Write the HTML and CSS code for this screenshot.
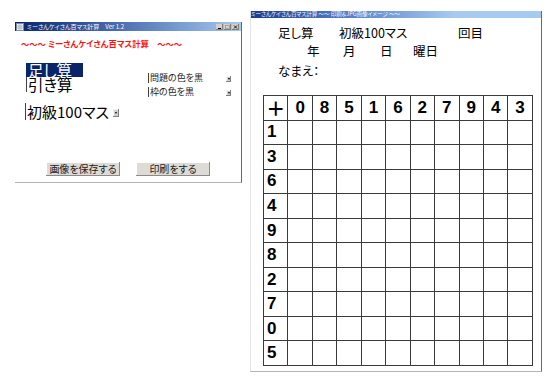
FILE: index.html
```html
<!DOCTYPE html>
<html lang="ja">
<head>
<meta charset="utf-8">
<link rel="stylesheet" href="styles.css">
</head>
<body>
<div class="win win1">
  <div class="titlebar tb1">
    <svg class="ticon" width="8" height="8" viewBox="0 0 8 8"><rect x="0.5" y="0.5" width="7" height="7" fill="#fff" stroke="#7a8aa8"/><path d="M1 3h6M1 5h6M3 1v6M5 1v6" stroke="#9aa6bd" stroke-width="0.8"/></svg>
    <span class="ttext">ミーさんケイさん百マス計算　Ver 1.2</span>
    <span class="tbtns">
      <span class="tbtn"><svg width="7" height="6" viewBox="0 0 7 6"><path d="M2 4.5h3" stroke="#000" stroke-width="1"/></svg></span>
      <span class="tbtn"><svg width="7" height="6" viewBox="0 0 7 6"><rect x="1.5" y="1.5" width="4" height="3" fill="none" stroke="#9a9a9a" stroke-width="0.8"/></svg></span>
      <span class="tbtn"><svg width="7" height="6" viewBox="0 0 7 6"><path d="M2 1.5l3 3M5 1.5l-3 3" stroke="#000" stroke-width="0.9"/></svg></span>
    </span>
  </div>
  <div class="body1">
    <div class="banner">～～～ ミーさんケイさん百マス計算　～～～</div>
    <div class="controls">
      <div class="leftcol">
        <div class="listbox">
          <div class="opt sel">足し算</div>
          <div class="opt">引き算</div>
        </div>
        <div class="combo big">初級100マス<span class="arrow"></span></div>
      </div>
      <div class="rightcol">
        <div class="combo small">問題の色を黒<span class="arrow"></span></div>
        <div class="combo small">枠の色を黒<span class="arrow"></span></div>
      </div>
    </div>
    <div class="buttons">
      <span class="btn">画像を保存する</span>
      <span class="btn">印刷をする</span>
    </div>
  </div>
</div>

<div class="win win2">
  <div class="titlebar tb2">
    <span class="ttext2">ミーさんケイさん百マス計算 ～～ 印刷＆JPG画像イメージ ～～</span>
  </div>
  <div class="line l1"><span class="w61">足し算</span><span class="w119">初級100マス</span><span>回目</span></div>
  <div class="line l2"><span class="w36">年</span><span class="w37">月</span><span class="w33">日</span><span>曜日</span></div>
  <div class="line l3">なまえ：</div>
  <div class="grid">
    <div class="c hd plus">＋</div><div class="c hd">0</div><div class="c hd">8</div><div class="c hd">5</div><div class="c hd">1</div><div class="c hd">6</div><div class="c hd">2</div><div class="c hd">7</div><div class="c hd">9</div><div class="c hd">4</div><div class="c hd">3</div>
    <div class="c rl">1</div><div class="c"></div><div class="c"></div><div class="c"></div><div class="c"></div><div class="c"></div><div class="c"></div><div class="c"></div><div class="c"></div><div class="c"></div><div class="c"></div>
    <div class="c rl">3</div><div class="c"></div><div class="c"></div><div class="c"></div><div class="c"></div><div class="c"></div><div class="c"></div><div class="c"></div><div class="c"></div><div class="c"></div><div class="c"></div>
    <div class="c rl">6</div><div class="c"></div><div class="c"></div><div class="c"></div><div class="c"></div><div class="c"></div><div class="c"></div><div class="c"></div><div class="c"></div><div class="c"></div><div class="c"></div>
    <div class="c rl">4</div><div class="c"></div><div class="c"></div><div class="c"></div><div class="c"></div><div class="c"></div><div class="c"></div><div class="c"></div><div class="c"></div><div class="c"></div><div class="c"></div>
    <div class="c rl">9</div><div class="c"></div><div class="c"></div><div class="c"></div><div class="c"></div><div class="c"></div><div class="c"></div><div class="c"></div><div class="c"></div><div class="c"></div><div class="c"></div>
    <div class="c rl">8</div><div class="c"></div><div class="c"></div><div class="c"></div><div class="c"></div><div class="c"></div><div class="c"></div><div class="c"></div><div class="c"></div><div class="c"></div><div class="c"></div>
    <div class="c rl">2</div><div class="c"></div><div class="c"></div><div class="c"></div><div class="c"></div><div class="c"></div><div class="c"></div><div class="c"></div><div class="c"></div><div class="c"></div><div class="c"></div>
    <div class="c rl">7</div><div class="c"></div><div class="c"></div><div class="c"></div><div class="c"></div><div class="c"></div><div class="c"></div><div class="c"></div><div class="c"></div><div class="c"></div><div class="c"></div>
    <div class="c rl">0</div><div class="c"></div><div class="c"></div><div class="c"></div><div class="c"></div><div class="c"></div><div class="c"></div><div class="c"></div><div class="c"></div><div class="c"></div><div class="c"></div>
    <div class="c rl">5</div><div class="c"></div><div class="c"></div><div class="c"></div><div class="c"></div><div class="c"></div><div class="c"></div><div class="c"></div><div class="c"></div><div class="c"></div><div class="c"></div>
  </div>
</div>
</body>
</html>
```
FILE: styles.css
```css
html, body {
  margin: 0;
  padding: 0;
}
body {
  width: 552px;
  height: 388px;
  background: #fff;
  position: relative;
  overflow: hidden;
  font-family: "Noto Sans CJK JP", "Noto Sans", sans-serif;
  font-feature-settings: "palt";
  color: #000;
}
.win {
  position: absolute;
  background: #fff;
  box-sizing: border-box;
}
.win1 {
  left: 15px;
  top: 22px;
  width: 227px;
  height: 161px;
  border-right: 1px solid #6a6a6a;
  border-bottom: 1px solid #b4b4b4;
}
.win2 {
  left: 250px;
  top: 11px;
  width: 292px;
  height: 361px;
  border-left: 1px solid #e4e4e4;
  border-right: 1px solid #6a6a6a;
  border-bottom: 1px solid #b4b4b4;
}
.titlebar {
  display: flex;
  align-items: center;
  color: #fff;
  white-space: nowrap;
  overflow: hidden;
}
.tb1 {
  height: 9px;
  background: linear-gradient(to right, #0a246a 0%, #4a6cb0 45%, #a6caf0 100%);
  padding-left: 1px;
}
.ticon {
  display: block;
  flex: none;
}
.ttext {
  font-size: 6px;
  line-height: 9px;
  margin-left: 3px;
}
.tbtns {
  margin-left: auto;
  margin-right: 2px;
  display: flex;
  gap: 1px;
}
.tbtn {
  width: 7px;
  height: 6px;
  background: #d4d0c8;
  box-shadow: inset -1px -1px 0 #808080;
  display: block;
}
.tbtn svg {
  display: block;
}
.tb2 {
  height: 7px;
  background: linear-gradient(to right, #1a3a8c 0%, #5a82c8 35%, #a6caf0 70%, #a6caf0 100%);
}
.ttext2 {
  font-size: 5.5px;
  line-height: 7px;
  margin-left: 0;
}
.body1 {
  padding: 7px 0 0 6px;
}
.banner {
  color: #ff1010;
  font-size: 8.3px;
  line-height: 10px;
  font-weight: 700;
  white-space: nowrap;
}
.controls {
  display: flex;
  margin-top: 15px;
  padding-left: 4px;
}
.leftcol {
  width: 123px;
  flex: none;
}
.listbox {
  margin-left: 1px;
  width: 57px;
  border-left: 1px solid #404040;
  box-sizing: border-box;
}
.opt {
  font-size: 15.5px;
  line-height: 14px;
  height: 14px;
  padding-left: 1px;
  white-space: nowrap;
}
.opt + .opt {
  height: 15px;
  line-height: 15px;
}
.sel {
  background: #0a246a;
  color: #fff;
  margin-left: -1px;
  padding-left: 2px;
}
.combo {
  position: relative;
  box-sizing: border-box;
  border-left: 1px solid #404040;
  white-space: nowrap;
}
.combo .arrow {
  position: absolute;
  background: #d4d0c8;
  box-shadow: inset -1px -1px 0 #808080, inset 1px 1px 0 #f4f4f4;
}
.combo .arrow::after {
  content: "";
  position: absolute;
  left: 50%;
  top: 50%;
  border-left: 1.5px solid transparent;
  border-right: 1.5px solid transparent;
  border-top: 2px solid #000;
  transform: translate(-50%, -50%);
}
.big {
  margin-top: 11px;
  width: 94px;
  height: 17px;
  font-size: 15px;
  line-height: 17px;
  padding-left: 1px;
}
.big .arrow {
  right: 0;
  top: 6px;
  width: 6px;
  height: 8px;
}
.rightcol {
  margin-top: 10px;
  display: flex;
  flex-direction: column;
  gap: 4px;
}
.small {
  width: 84px;
  height: 10px;
  font-size: 9px;
  line-height: 10px;
  padding-left: 1px;
  color: #222;
}
.small .arrow {
  right: 1px;
  top: 3px;
  width: 5px;
  height: 6px;
}
.buttons {
  display: flex;
  gap: 16px;
  margin-top: 42px;
  margin-left: 25px;
}
.btn {
  width: 74px;
  height: 14px;
  box-sizing: border-box;
  background: #dedbd6;
  box-shadow: inset -1px -1px 0 #8a8a8a, inset 1px 1px 0 #fff;
  font-size: 10px;
  line-height: 14px;
  text-align: center;
  color: #222;
  white-space: nowrap;
}
.line {
  font-size: 12.5px;
  height: 16px;
  line-height: 16px;
  white-space: nowrap;
  display: flex;
}
.line span {
  display: block;
  flex: none;
}
.l1 {
  margin-top: 7px;
  padding-left: 27px;
}
.l2 {
  margin-top: 2px;
  padding-left: 56px;
}
.l3 {
  margin-top: 4px;
  padding-left: 27px;
}
.w61 { width: 61px; }
.w119 { width: 119px; }
.w36 { width: 36px; }
.w37 { width: 37px; }
.w33 { width: 33px; }
.grid {
  margin-top: 16px;
  margin-left: 12px;
  display: grid;
  grid-template-columns: repeat(11, 24.45px);
  grid-auto-rows: 24.55px;
  width: 270px;
  box-sizing: border-box;
  border-top: 1px solid #3a3a3a;
  border-left: 1px solid #3a3a3a;
}
.c {
  border-right: 1px solid #3a3a3a;
  border-bottom: 1px solid #3a3a3a;
  box-sizing: border-box;
  font-family: "Liberation Sans", Arial, sans-serif;
  font-weight: 700;
  font-size: 17px;
  display: flex;
  align-items: center;
}
.hd {
  justify-content: center;
}
.rl {
  padding-left: 3px;
}
.plus {
  font-family: "Noto Sans CJK JP", sans-serif;
  font-size: 19px;
  font-weight: 700;
  padding-left: 0;
}
```
